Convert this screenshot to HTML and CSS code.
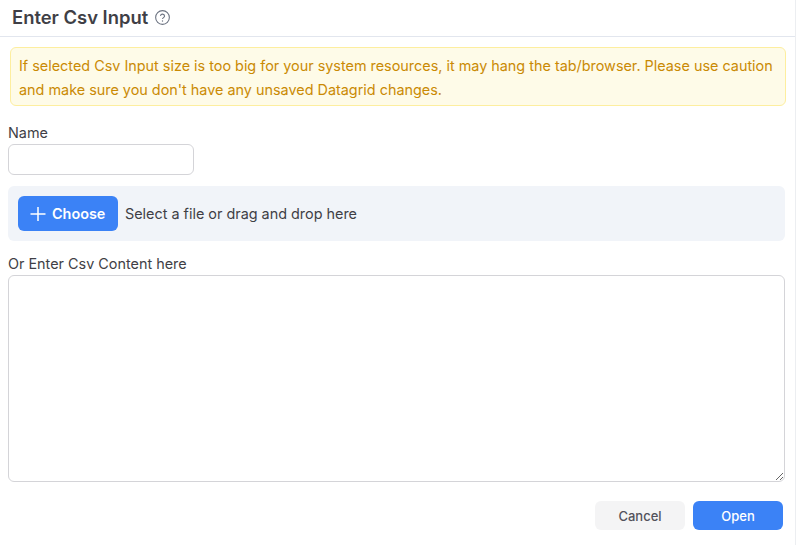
FILE: index.html
```html
<!DOCTYPE html>
<html lang="en">
<head>
<meta charset="utf-8">
<title>Enter Csv Input</title>
<link rel="stylesheet" href="styles.css">
</head>
<body>
<div class="dialog">
  <header class="head">
    <span class="title">Enter Csv Input</span>
    <svg class="help" viewBox="0 0 14 14" width="15" height="15" aria-hidden="true">
      <circle cx="7" cy="7" r="6.4" fill="none" stroke="#6b7280" stroke-width="1"/>
      <path d="M5.1 5.4a1.95 1.95 0 0 1 3.85.3c0 1.25-1.95 1.5-1.95 2.75" fill="none" stroke="#6b7280" stroke-width="1"/>
      <circle cx="7" cy="10.2" r=".65" fill="#6b7280"/>
    </svg>
  </header>
  <div class="content">
    <div class="alert">If selected Csv Input size is too big for your system resources, it may hang the tab/browser. Please use caution and make sure you don't have any unsaved Datagrid changes.</div>
    <label class="label name-label" for="name">Name</label>
    <input class="input" id="name" type="text">
    <div class="upload">
      <button class="choose" type="button">
        <svg viewBox="0 0 16 16" width="16" height="16" aria-hidden="true"><path d="M8 1v14M.5 8h15" stroke="#fff" stroke-width="1.5" fill="none"/></svg>
        <span>Choose</span>
      </button>
      <span class="hint">Select a file or drag and drop here</span>
    </div>
    <label class="label csv-label" for="csv">Or Enter Csv Content here</label>
    <textarea class="area" id="csv"></textarea>
  </div>
  <footer class="foot">
    <button class="btn cancel" type="button">Cancel</button>
    <button class="btn open" type="button">Open</button>
  </footer>
</div>
</body>
</html>
```
FILE: styles.css
```css
* { box-sizing: border-box; }
html, body { margin: 0; padding: 0; height: 100%; background: #fff; overflow: hidden; }
body { font-family: Inter, "Liberation Sans", sans-serif; font-size: 14.4px; color: #3f3f46; }
.dialog { width: 796px; height: 545px; display: flex; flex-direction: column; border-right: 1px solid #eceef1; }
.head { height: 37px; padding: 0 12px 3px; display: flex; align-items: center; gap: 7px; border-bottom: 1px solid #e2e6ee; }
.title { font-size: 18.4px; font-weight: 600; color: #3f3f46; }
.help { flex: none; margin-top: 1px; }
.content { padding: 0 10px 0 8px; display: flex; flex-direction: column; }
.alert { margin: 10px -0.5px 0 2px; height: 59px; padding: 5.5px 8px; background: #fefbe8; border: 1px solid #fdee9f; border-radius: 6px; color: #ca8a04; font-size: 14.4px; line-height: 24px; }
.label { display: block; line-height: 17px; color: #3f3f46; font-size: 14.4px; }
.name-label { margin-top: 18px; }
.input { width: 186px; height: 31px; margin-top: 3px; border: 1px solid #d4d4d8; border-radius: 6px; background: #fff; }
.upload { margin-top: 11px; height: 55px; background: #f1f4f9; border-radius: 6px; padding: 0 10px; display: flex; align-items: center; gap: 7px; }
.choose { width: 100px; height: 35px; padding: 0 0 0 12px; display: flex; align-items: center; gap: 6px; background: #3b82f6; color: #fff; border: 0; border-radius: 6px; font: 600 14.4px Inter, "Liberation Sans", sans-serif; }
.hint { color: #3f3f46; }
.csv-label { margin-top: 14px; }
.area { display: block; width: 100%; height: 207px; margin-top: 3px; border: 1px solid #d4d4d8; border-radius: 6px; background: #fff; }
.foot { display: flex; justify-content: flex-end; gap: 8px; padding: 19px 12px 0 0; }
.btn { width: 90px; height: 29px; border: 0; border-radius: 6px; font: 500 13px Inter, "Liberation Sans", sans-serif; }
.cancel { background: #f4f4f5; color: #52525b; }
.open { background: #3b82f6; color: #fff; }
```
